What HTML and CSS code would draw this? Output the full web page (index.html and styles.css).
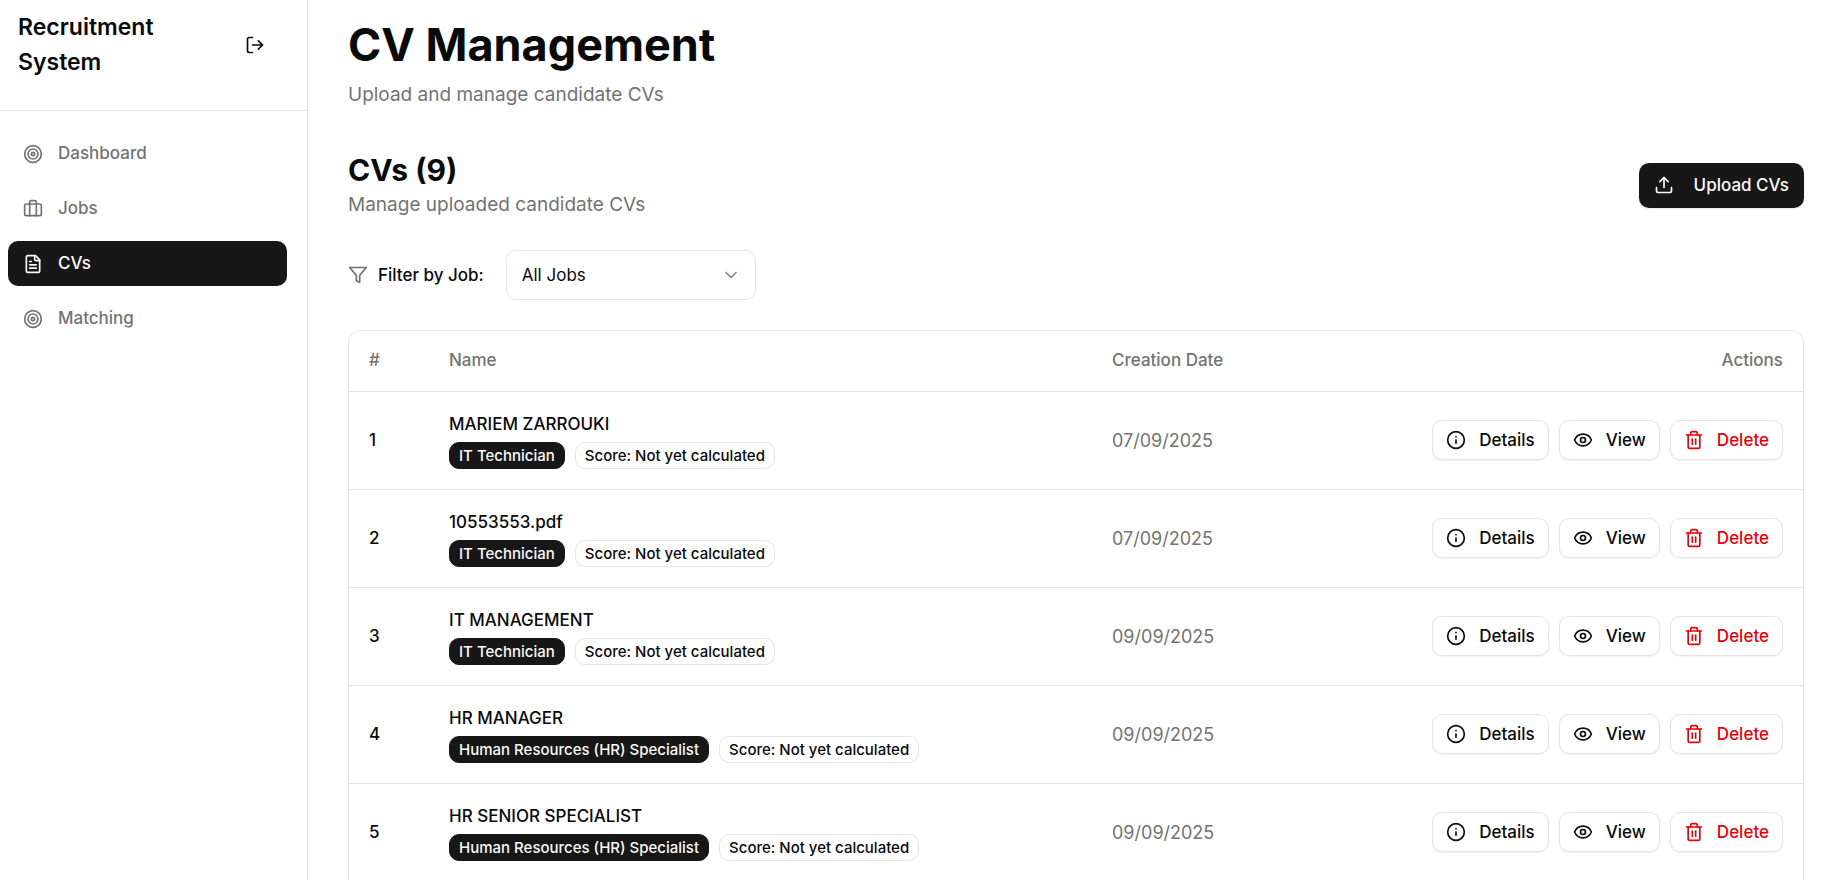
FILE: index.html
```html
<!DOCTYPE html>
<html lang="en">
<head>
<meta charset="utf-8">
<title>CV Management</title>
<link rel="stylesheet" href="styles.css">
</head>
<body>
<svg class="sprite" aria-hidden="true">
  <symbol id="target" viewBox="0 0 24 24"><circle cx="12" cy="12" r="10"/><circle cx="12" cy="12" r="6"/><circle cx="12" cy="12" r="2"/></symbol>
  <symbol id="logout" viewBox="0 0 24 24"><path d="m16 17 5-5-5-5"/><path d="M21 12H9"/><path d="M9 21H5a2 2 0 0 1-2-2V5a2 2 0 0 1 2-2h4"/></symbol>
  <symbol id="jobs" viewBox="0 0 24 24"><rect x="2" y="6" width="20" height="14" rx="2"/><path d="M16 20V4a2 2 0 0 0-2-2h-4a2 2 0 0 0-2 2v16"/></symbol>
  <symbol id="file" viewBox="0 0 24 24"><path d="M15 2H6a2 2 0 0 0-2 2v16a2 2 0 0 0 2 2h12a2 2 0 0 0 2-2V7Z"/><path d="M14 2v4a2 2 0 0 0 2 2h4"/><path d="M10 9H8"/><path d="M16 13H8"/><path d="M16 17H8"/></symbol>
  <symbol id="upload" viewBox="0 0 24 24"><path d="M12 3v12"/><path d="m17 8-5-5-5 5"/><path d="M21 15v4a2 2 0 0 1-2 2H5a2 2 0 0 1-2-2v-4"/></symbol>
  <symbol id="filter" viewBox="0 0 24 24"><path d="M22 3H2l8 9.46V19l4 2v-8.54Z"/></symbol>
  <symbol id="chevron" viewBox="0 0 24 24"><path d="m6 9 6 6 6-6"/></symbol>
  <symbol id="info" viewBox="0 0 24 24"><circle cx="12" cy="12" r="10"/><path d="M12 16v-4"/><path d="M12 8h.01"/></symbol>
  <symbol id="eye" viewBox="0 0 24 24"><path d="M2.062 12.348a1 1 0 0 1 0-.696 10.75 10.75 0 0 1 19.876 0 1 1 0 0 1 0 .696 10.75 10.75 0 0 1-19.876 0"/><circle cx="12" cy="12" r="3"/></symbol>
  <symbol id="trash" viewBox="0 0 24 24"><path d="M3 6h18"/><path d="M19 6v14a2 2 0 0 1-2 2H7a2 2 0 0 1-2-2V6"/><path d="M8 6V4a2 2 0 0 1 2-2h4a2 2 0 0 1 2 2v2"/><path d="M10 11v6"/><path d="M14 11v6"/></symbol>
</svg>
<div class="app">
  <aside class="sidebar">
    <div class="brand">
      <div class="brand-name">Recruitment System</div>
      <button class="logout" type="button" aria-label="Log out"><svg class="icon"><use href="#logout"/></svg></button>
    </div>
    <nav class="nav">
      <a class="nav-link" href="#"><svg class="icon"><use href="#target"/></svg>Dashboard</a>
      <a class="nav-link" href="#"><svg class="icon"><use href="#jobs"/></svg>Jobs</a>
      <a class="nav-link active" href="#" aria-current="page"><svg class="icon"><use href="#file"/></svg>CVs</a>
      <a class="nav-link" href="#"><svg class="icon"><use href="#target"/></svg>Matching</a>
    </nav>
  </aside>
  <main class="main">
    <h1 class="title">CV Management</h1>
    <p class="lead">Upload and manage candidate CVs</p>
    <div class="section-head">
      <div>
        <h2 class="subtitle">CVs (9)</h2>
        <p class="lead">Manage uploaded candidate CVs</p>
      </div>
      <button class="upload" type="button"><svg class="icon"><use href="#upload"/></svg>Upload CVs</button>
    </div>
    <div class="filter">
      <svg class="icon muted"><use href="#filter"/></svg>
      <label class="filter-label" for="job">Filter by Job:</label>
      <div class="select-wrap">
        <select class="select" id="job"><option>All Jobs</option><option>IT Technician</option><option>Human Resources (HR) Specialist</option></select>
        <svg class="icon chevron"><use href="#chevron"/></svg>
      </div>
    </div>
    <div class="table-card">
      <table class="table">
        <thead>
          <tr><th class="col-num">#</th><th class="col-name">Name</th><th class="col-date">Creation Date</th><th class="col-actions">Actions</th></tr>
        </thead>
        <tbody>
          <tr>
            <td class="num">1</td>
            <td><div class="name">MARIEM ZARROUKI</div><div class="badges"><span class="badge solid">IT Technician</span><span class="badge">Score: Not yet calculated</span></div></td>
            <td class="date">07/09/2025</td>
            <td><div class="actions"><button class="btn" type="button"><svg class="icon"><use href="#info"/></svg>Details</button><button class="btn" type="button"><svg class="icon"><use href="#eye"/></svg>View</button><button class="btn danger" type="button"><svg class="icon"><use href="#trash"/></svg>Delete</button></div></td>
          </tr>
          <tr>
            <td class="num">2</td>
            <td><div class="name">10553553.pdf</div><div class="badges"><span class="badge solid">IT Technician</span><span class="badge">Score: Not yet calculated</span></div></td>
            <td class="date">07/09/2025</td>
            <td><div class="actions"><button class="btn" type="button"><svg class="icon"><use href="#info"/></svg>Details</button><button class="btn" type="button"><svg class="icon"><use href="#eye"/></svg>View</button><button class="btn danger" type="button"><svg class="icon"><use href="#trash"/></svg>Delete</button></div></td>
          </tr>
          <tr>
            <td class="num">3</td>
            <td><div class="name">IT MANAGEMENT</div><div class="badges"><span class="badge solid">IT Technician</span><span class="badge">Score: Not yet calculated</span></div></td>
            <td class="date">09/09/2025</td>
            <td><div class="actions"><button class="btn" type="button"><svg class="icon"><use href="#info"/></svg>Details</button><button class="btn" type="button"><svg class="icon"><use href="#eye"/></svg>View</button><button class="btn danger" type="button"><svg class="icon"><use href="#trash"/></svg>Delete</button></div></td>
          </tr>
          <tr>
            <td class="num">4</td>
            <td><div class="name">HR MANAGER</div><div class="badges"><span class="badge solid">Human Resources (HR) Specialist</span><span class="badge">Score: Not yet calculated</span></div></td>
            <td class="date">09/09/2025</td>
            <td><div class="actions"><button class="btn" type="button"><svg class="icon"><use href="#info"/></svg>Details</button><button class="btn" type="button"><svg class="icon"><use href="#eye"/></svg>View</button><button class="btn danger" type="button"><svg class="icon"><use href="#trash"/></svg>Delete</button></div></td>
          </tr>
          <tr>
            <td class="num">5</td>
            <td><div class="name">HR SENIOR SPECIALIST</div><div class="badges"><span class="badge solid">Human Resources (HR) Specialist</span><span class="badge">Score: Not yet calculated</span></div></td>
            <td class="date">09/09/2025</td>
            <td><div class="actions"><button class="btn" type="button"><svg class="icon"><use href="#info"/></svg>Details</button><button class="btn" type="button"><svg class="icon"><use href="#eye"/></svg>View</button><button class="btn danger" type="button"><svg class="icon"><use href="#trash"/></svg>Delete</button></div></td>
          </tr>
        </tbody>
      </table>
    </div>
  </main>
</div>
</body>
</html>
```
FILE: styles.css
```css
:root {
  --ink: #0a0a0a;
  --dark: #171717;
  --muted: #737373;
  --line: #e5e5e5;
  --red: #e7000b;
}

* { box-sizing: border-box; }

body {
  margin: 0;
  background: #fff;
  color: var(--ink);
  font-family: Inter, "Liberation Sans", sans-serif;
  font-size: 17px;
  line-height: 25px;
}

h1, h2, p { margin: 0; }

button, select { font: inherit; color: inherit; }

.sprite { display: none; }

.icon {
  width: 20px;
  height: 20px;
  flex: none;
  fill: none;
  stroke: currentColor;
  stroke-width: 2;
  stroke-linecap: round;
  stroke-linejoin: round;
}

.muted { color: var(--muted); }

.app {
  display: flex;
  height: 100vh;
  overflow: hidden;
}

.sidebar {
  width: 308px;
  flex: none;
  border-right: 1px solid var(--line);
}

.brand {
  display: flex;
  justify-content: space-between;
  padding: 10px 30px 30px 18px;
  border-bottom: 1px solid var(--line);
}

.brand-name {
  width: 160px;
  font-size: 23px;
  line-height: 35px;
  font-weight: 600;
}

.logout {
  display: grid;
  place-items: center;
  align-self: center;
  width: 45px;
  height: 45px;
  padding: 0;
  border: 0;
  border-radius: 10px;
  background: none;
}

.nav {
  display: flex;
  flex-direction: column;
  gap: 10px;
  padding: 20px 20px 20px 8px;
}

.nav-link {
  display: flex;
  align-items: center;
  gap: 15px;
  height: 45px;
  padding: 0 15px;
  border-radius: 10px;
  color: var(--muted);
  font-weight: 500;
  text-decoration: none;
}

.nav-link.active {
  background: var(--dark);
  color: #fafafa;
}

.main {
  flex: 1;
  min-width: 0;
  padding: 20px 27px 0 40px;
}

.title {
  font-size: 45px;
  line-height: 50px;
  font-weight: 700;
}

.lead {
  font-size: 19px;
  line-height: 30px;
  color: var(--muted);
}

.title + .lead { margin-top: 10px; }

.section-head {
  display: flex;
  align-items: center;
  justify-content: space-between;
  margin: 40px 0 30px;
}

.subtitle {
  font-size: 30px;
  line-height: 40px;
  font-weight: 700;
}

.upload {
  display: flex;
  align-items: center;
  gap: 20px;
  height: 45px;
  padding: 0 15px;
  border: 0;
  border-radius: 10px;
  background: var(--dark);
  color: #fafafa;
  font-weight: 500;
  box-shadow: 0 1px 2px rgb(0 0 0 / 10%);
}

.filter {
  display: flex;
  align-items: center;
  gap: 10px;
  margin-bottom: 30px;
}

.filter-label { font-weight: 500; }

.select-wrap {
  display: grid;
  align-items: center;
  margin-left: 12px;
}

.select {
  grid-area: 1 / 1;
  width: 250px;
  height: 50px;
  padding: 0 15px;
  border: 1px solid var(--line);
  border-radius: 10px;
  background: #fff;
  appearance: none;
}

.chevron {
  grid-area: 1 / 1;
  justify-self: end;
  margin-right: 15px;
  color: #858585;
  pointer-events: none;
}

.table-card {
  padding-bottom: 20px;
  border: 1px solid var(--line);
  border-radius: 12px;
}

.table {
  width: 100%;
  table-layout: fixed;
  border-collapse: collapse;
}

.table th {
  height: 60px;
  padding: 0 20px;
  border-bottom: 1px solid var(--line);
  color: var(--muted);
  font-weight: 500;
  text-align: left;
}

.table td {
  height: 98px;
  padding: 0 20px;
  border-bottom: 1px solid var(--line);
}

.col-num { width: 80px; }
.col-name { width: 45.6%; }
.col-date { width: 20%; }
.table .col-actions { text-align: right; }

.num { font-weight: 500; }
.name { font-weight: 500; margin-bottom: 5px; }
.date { font-size: 18px; color: var(--muted); }

.badges {
  display: flex;
  gap: 10px;
}

.badge {
  padding: 2px 9px;
  border: 1px solid var(--line);
  border-radius: 10px;
  font-size: 15px;
  line-height: 21px;
  font-weight: 500;
}

.badge.solid {
  border-color: var(--dark);
  background: var(--dark);
  color: #fafafa;
}

.actions {
  display: flex;
  justify-content: flex-end;
  gap: 10px;
}

.btn {
  display: flex;
  align-items: center;
  gap: 13px;
  height: 40px;
  padding: 0 13px;
  border: 1px solid var(--line);
  border-radius: 10px;
  background: #fff;
  font-weight: 500;
  box-shadow: 0 1px 2px rgb(0 0 0 / 6%);
}

.btn.danger { color: var(--red); }
```
